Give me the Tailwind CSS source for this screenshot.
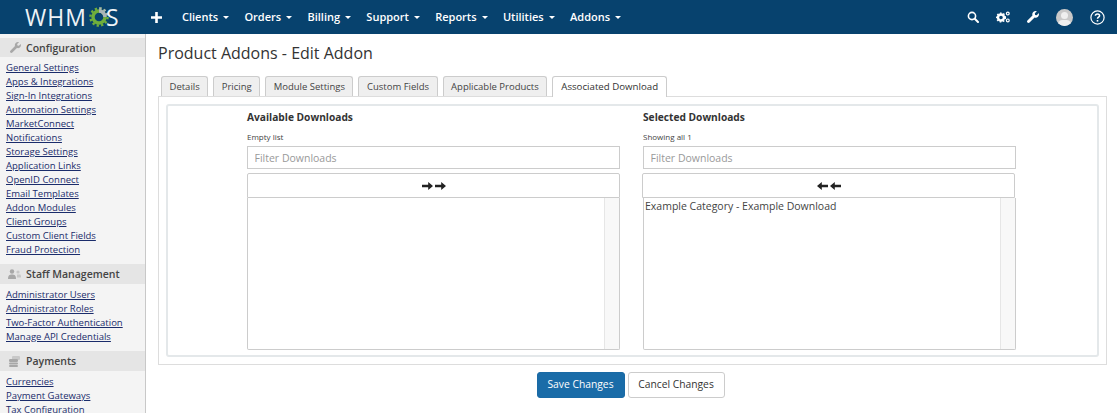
<!DOCTYPE html>
<html lang="en">
<head>
  <meta charset="UTF-8">
  <title>Product Addons - Edit Addon</title>
  <script src="https://cdn.jsdelivr.net/npm/@tailwindcss/browser@4"></script>
</head>
<body class="h-[413px] w-[1117px] overflow-hidden bg-white font-['Open_Sans',sans-serif] text-[#333]">
  <!-- top nav -->
  <header class="flex h-[34px] items-center bg-[#07426e] text-white">
    <a class="flex w-[151px] items-center pl-[25px] text-[23px] font-medium leading-none text-[#eef3f7]">
      <span class="tracking-[1px]">WHM</span>
      <svg class="ml-[2px] h-[20px] w-[20px] shrink-0" viewBox="0 0 20 20">
        <defs><clipPath id="gear-grey"><rect x="10" y="0" width="10" height="10"/></clipPath></defs>
        <circle cx="10" cy="10" r="6" fill="none" stroke="#6fae3c" stroke-width="3.4"/>
        <circle cx="10" cy="10" r="8.6" fill="none" stroke="#6fae3c" stroke-width="2.4" stroke-dasharray="2.3 2.2"/>
        <g clip-path="url(#gear-grey)">
          <circle cx="10" cy="10" r="6" fill="none" stroke="#aab4b8" stroke-width="3.4"/>
          <circle cx="10" cy="10" r="8.6" fill="none" stroke="#aab4b8" stroke-width="2.4" stroke-dasharray="2.3 2.2"/>
        </g>
      </svg>
      <span class="ml-[-3px]">S</span>
    </a>
    <svg class="h-[11px] w-[11px]" viewBox="0 0 11 11"><path d="M4.2 0h2.6v4.2H11v2.6H6.8V11H4.2V6.8H0V4.2h4.2z" fill="#fff"/></svg>
    <nav class="ml-[20px] flex gap-[15.3px] text-[11px] font-semibold">
      <a class="flex items-center gap-[5px]">Clients <span class="h-0 w-0 border-x-[3px] border-t-[3px] border-x-transparent border-t-white"></span></a>
      <a class="flex items-center gap-[5px]">Orders <span class="h-0 w-0 border-x-[3px] border-t-[3px] border-x-transparent border-t-white"></span></a>
      <a class="flex items-center gap-[5px]">Billing <span class="h-0 w-0 border-x-[3px] border-t-[3px] border-x-transparent border-t-white"></span></a>
      <a class="flex items-center gap-[5px]">Support <span class="h-0 w-0 border-x-[3px] border-t-[3px] border-x-transparent border-t-white"></span></a>
      <a class="flex items-center gap-[5px]">Reports <span class="h-0 w-0 border-x-[3px] border-t-[3px] border-x-transparent border-t-white"></span></a>
      <a class="flex items-center gap-[5px]">Utilities <span class="h-0 w-0 border-x-[3px] border-t-[3px] border-x-transparent border-t-white"></span></a>
      <a class="flex items-center gap-[5px]">Addons <span class="h-0 w-0 border-x-[3px] border-t-[3px] border-x-transparent border-t-white"></span></a>
    </nav>
    <div class="ml-auto flex items-center gap-[17px] pr-[12px]">
      <svg class="h-[12px] w-[12px]" viewBox="0 0 12 12"><circle cx="5" cy="5" r="3.6" fill="none" stroke="#fff" stroke-width="1.6"/><path d="M7.8 7.8L11 11" stroke="#fff" stroke-width="2" stroke-linecap="round"/></svg>
      <svg class="h-[12px] w-[14px]" viewBox="0 0 14 12"><circle cx="5" cy="6.5" r="3" fill="none" stroke="#fff" stroke-width="2.4"/><circle cx="5" cy="6.5" r="4.4" fill="none" stroke="#fff" stroke-width="1.4" stroke-dasharray="1.6 1.6"/><circle cx="11.8" cy="2.6" r="1.4" fill="none" stroke="#fff" stroke-width="1.2"/><circle cx="11.8" cy="9.4" r="1.4" fill="none" stroke="#fff" stroke-width="1.2"/></svg>
      <svg class="h-[12px] w-[12px]" viewBox="0 0 512 512"><path d="M507.73 109.1c-2.24-9.03-13.54-12.09-20.12-5.51l-74.36 74.36-67.88-11.31-11.31-67.88 74.36-74.36c6.62-6.62 3.43-17.9-5.66-20.16-47.38-11.74-99.55.91-136.58 37.93-39.64 39.64-50.55 97.1-34.05 147.2L18.74 402.76c-24.99 24.99-24.99 65.51 0 90.5 24.99 24.99 65.51 24.99 90.5 0l213.21-213.21c50.12 16.71 107.47 5.68 147.37-34.22 37.07-37.07 49.7-89.32 37.91-136.73z" fill="#fff"/></svg>
      <span class="relative h-[17px] w-[17px] overflow-hidden rounded-full bg-[#c9c9c9]"><span class="absolute left-[5px] top-[3px] h-[7px] w-[7px] rounded-full bg-[#efefef]"></span><span class="absolute left-[2px] top-[11px] h-[9px] w-[13px] rounded-full bg-[#efefef]"></span></span>
      <svg class="h-[15px] w-[15px]" viewBox="0 0 15 15"><circle cx="7.5" cy="7.5" r="6.6" fill="none" stroke="#fff" stroke-width="1.2"/><path d="M5.4 5.8C5.4 3.4 9.6 3.4 9.6 5.8 9.6 7.2 7.5 7.2 7.5 8.8" fill="none" stroke="#fff" stroke-width="1.5"/><rect x="6.7" y="10" width="1.6" height="1.6" fill="#fff"/></svg>
    </div>
  </header>

  <div class="flex h-[379px]">
    <!-- sidebar -->
    <aside class="w-[146px] shrink-0 overflow-hidden border-r border-[#c8c8c8] bg-[#f4f4f4] pt-[4px] text-[9.5px] leading-[14px]">
      <h3 class="flex h-[19px] items-center gap-[5px] bg-[#e5e5e5] pl-[10px] text-[10.5px] font-semibold text-[#444]">
        <svg class="h-[11px] w-[11px]" viewBox="0 0 512 512"><path d="M507.73 109.1c-2.24-9.03-13.54-12.09-20.12-5.51l-74.36 74.36-67.88-11.31-11.31-67.88 74.36-74.36c6.62-6.62 3.43-17.9-5.66-20.16-47.38-11.74-99.55.91-136.58 37.93-39.64 39.64-50.55 97.1-34.05 147.2L18.74 402.76c-24.99 24.99-24.99 65.51 0 90.5 24.99 24.99 65.51 24.99 90.5 0l213.21-213.21c50.12 16.71 107.47 5.68 147.37-34.22 37.07-37.07 49.7-89.32 37.91-136.73z" fill="#a8a8a8"/></svg>
        Configuration
      </h3>
      <ul class="mb-[7px] mt-[4px] pl-[6px] text-[#1a2c6b] underline">
        <li>General Settings</li>
        <li>Apps &amp; Integrations</li>
        <li>Sign-In Integrations</li>
        <li>Automation Settings</li>
        <li>MarketConnect</li>
        <li>Notifications</li>
        <li>Storage Settings</li>
        <li>Application Links</li>
        <li>OpenID Connect</li>
        <li>Email Templates</li>
        <li>Addon Modules</li>
        <li>Client Groups</li>
        <li>Custom Client Fields</li>
        <li>Fraud Protection</li>
      </ul>
      <h3 class="flex h-[20px] items-center gap-[5px] bg-[#e5e5e5] pl-[8px] text-[10.5px] font-semibold text-[#444]">
        <svg class="h-[10px] w-[13px]" viewBox="0 0 13 10"><circle cx="4" cy="2.5" r="2.2" fill="#a8a8a8"/><path d="M0 10C0 6 1.5 5.4 4 5.4S8 6 8 10z" fill="#a8a8a8"/><circle cx="10" cy="3" r="1.6" fill="#c8c8c8"/><path d="M9 5.5h3c1 0 1 2 1 3H9z" fill="#c8c8c8"/></svg>
        Staff Management
      </h3>
      <ul class="mb-[7px] mt-[4px] pl-[6px] text-[#1a2c6b] underline">
        <li>Administrator Users</li>
        <li>Administrator Roles</li>
        <li>Two-Factor Authentication</li>
        <li>Manage API Credentials</li>
      </ul>
      <h3 class="flex h-[20px] items-center gap-[6px] bg-[#e5e5e5] pl-[9px] text-[10.5px] font-semibold text-[#444]">
        <svg class="h-[11px] w-[11px]" viewBox="0 0 11 11"><rect x="3" y="0" width="8" height="4" rx="1" fill="#c8c8c8"/><rect x="0" y="3" width="9" height="3" rx="1.2" fill="#a8a8a8"/><rect x="0" y="6.5" width="9" height="2" rx="1" fill="#a8a8a8"/><rect x="0" y="9" width="9" height="2" rx="1" fill="#a8a8a8"/></svg>
        Payments
      </h3>
      <ul class="mt-[4px] pl-[6px] text-[#1a2c6b] underline">
        <li>Currencies</li>
        <li>Payment Gateways</li>
        <li>Tax Configuration</li>
      </ul>
    </aside>

    <!-- main -->
    <main class="min-w-0 flex-1 pl-[12px] pr-[10px]">
      <h1 class="mt-[8px] text-[16px] leading-[22px] text-[#333]">Product Addons - Edit Addon</h1>
      <div class="ml-[3px] mt-[11px] flex h-[21px] gap-[6px] text-[9.5px] leading-[19px] text-[#444]">
        <a class="relative top-[1px] h-[20px] rounded-t-[3px] border border-b-0 border-[#ccc] bg-[#efefef] px-[7.5px]">Details</a>
        <a class="relative top-[1px] ml-[-1px] h-[20px] rounded-t-[3px] border border-b-0 border-[#ccc] bg-[#efefef] px-[7.5px]">Pricing</a>
        <a class="relative top-[1px] ml-[-1px] h-[20px] rounded-t-[3px] border border-b-0 border-[#ccc] bg-[#efefef] px-[7.5px]">Module Settings</a>
        <a class="relative top-[1px] ml-[-1px] h-[20px] rounded-t-[3px] border border-b-0 border-[#ccc] bg-[#efefef] px-[7.5px]">Custom Fields</a>
        <a class="relative top-[1px] ml-[-1px] h-[20px] rounded-t-[3px] border border-b-0 border-[#ccc] bg-[#efefef] px-[7.5px]">Applicable Products</a>
        <a class="relative top-[1px] z-10 ml-[-1px] h-[21px] rounded-t-[3px] border border-b-0 border-[#ccc] bg-white px-[8px] text-[9.7px] font-medium text-[#333]">Associated Download</a>
      </div>
      <section class="h-[269px] w-[949px] border border-[#ddd] p-[7px]">
        <div class="flex h-[253px] gap-[23px] rounded-[3px] border-2 border-[#e4e8ea] pl-[79px] pt-[3px]">
          <div class="w-[373px]">
            <h4 class="text-[10.2px] font-bold leading-[16px] text-[#333]">Available Downloads</h4>
            <p class="mt-[6px] text-[8px] leading-[12px] text-[#444]">Empty list</p>
            <input class="mt-[3px] block h-[23px] w-full border border-[#ccc] px-[6.5px] text-[10.5px] placeholder:text-[#999]" placeholder="Filter Downloads">
            <button class="mt-[4px] flex h-[25px] w-full items-center justify-center gap-[2px] rounded-t-[2px] border border-[#ccc] bg-white">
              <svg class="h-[8px] w-[11px]" viewBox="0 0 11 8"><path d="M0 2.8h6.2V0L11 4 6.2 8V5.2H0z" fill="#222"/></svg>
              <svg class="h-[8px] w-[11px]" viewBox="0 0 11 8"><path d="M0 2.8h6.2V0L11 4 6.2 8V5.2H0z" fill="#222"/></svg>
            </button>
            <div class="flex h-[152px] rounded-b-[2px] border border-t-0 border-[#ccc]">
              <div class="flex-1"></div>
              <div class="w-[15px] border-l border-[#e6e6e6] bg-[#f8f8f8]"></div>
            </div>
          </div>
          <div class="w-[373px]">
            <h4 class="text-[10.2px] font-bold leading-[16px] text-[#333]">Selected Downloads</h4>
            <p class="mt-[6px] text-[8px] leading-[12px] text-[#444]">Showing all 1</p>
            <input class="mt-[3px] block h-[23px] w-full border border-[#ccc] px-[6.5px] text-[10.5px] placeholder:text-[#999]" placeholder="Filter Downloads">
            <button class="ml-[-1px] mt-[4px] flex h-[25px] w-full items-center justify-center gap-[2px] rounded-t-[2px] border border-[#ccc] bg-white">
              <svg class="h-[8px] w-[11px]" viewBox="0 0 11 8"><path d="M11 2.8H4.8V0L0 4 4.8 8V5.2H11z" fill="#222"/></svg>
              <svg class="h-[8px] w-[11px]" viewBox="0 0 11 8"><path d="M11 2.8H4.8V0L0 4 4.8 8V5.2H11z" fill="#222"/></svg>
            </button>
            <div class="flex h-[152px] rounded-b-[2px] border border-t-0 border-[#ccc]">
              <div class="flex-1 pl-[1px] pt-[1px] text-[10.5px] leading-[15px] text-[#444]">Example Category - Example Download</div>
              <div class="w-[15px] border-l border-[#e6e6e6] bg-[#f8f8f8]"></div>
            </div>
          </div>
        </div>
      </section>
      <div class="ml-[-2px] mt-[7px] flex w-[949px] justify-center gap-[3px] text-[10.3px]">
        <button class="h-[26px] w-[88px] rounded-[3px] border border-[#1a6aa5] bg-[#1a6ca8] text-white">Save Changes</button>
        <button class="h-[26px] w-[97px] rounded-[3px] border border-[#ccc] bg-white text-[#333]">Cancel Changes</button>
      </div>
    </main>
  </div>
</body>
</html>
